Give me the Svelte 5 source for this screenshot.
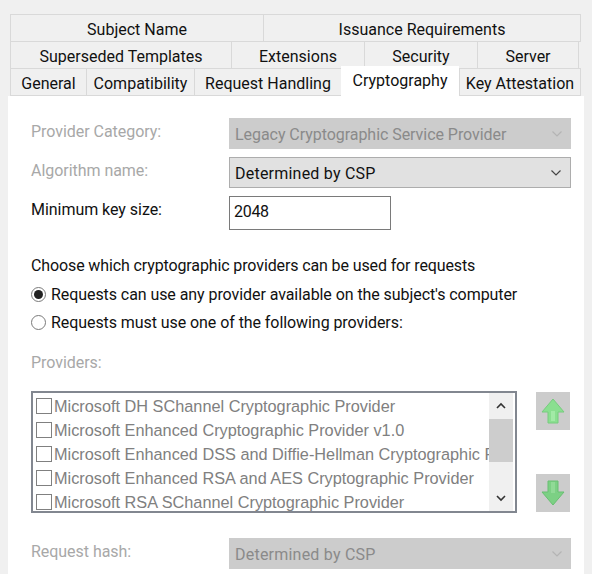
<script>
	const tabRows = [
		[
			{ label: 'Subject Name', width: 254 },
			{ label: 'Issuance Requirements', width: 318 }
		],
		[
			{ label: 'Superseded Templates', width: 222 },
			{ label: 'Extensions', width: 134 },
			{ label: 'Security', width: 114 },
			{ label: 'Server', width: 102 }
		]
	]
	const frontTabs = [
		{ label: 'General', width: 77 },
		{ label: 'Compatibility', width: 109 },
		{ label: 'Request Handling', width: 148 },
		{ label: 'Cryptography', width: 118, active: true },
		{ label: 'Key Attestation', width: 122 }
	]
	const providers = [
		'Microsoft DH SChannel Cryptographic Provider',
		'Microsoft Enhanced Cryptographic Provider v1.0',
		'Microsoft Enhanced DSS and Diffie-Hellman Cryptographic Provider',
		'Microsoft Enhanced RSA and AES Cryptographic Provider',
		'Microsoft RSA SChannel Cryptographic Provider'
	]
</script>

<div class="dialog">
	<div class="tabs">
		{#each tabRows as row}
			<div class="tab-row">
				{#each row as tab}
					<div class="tab" style="width: {tab.width}px">{tab.label}</div>
				{/each}
			</div>
		{/each}
		<div class="tab-row front">
			{#each frontTabs as tab}
				<div class="tab" class:active={tab.active} style="width: {tab.width}px">{tab.label}</div>
			{/each}
		</div>
	</div>

	<div class="panel">
		<div class="field first">
			<span class="label disabled">Provider Category:</span>
			<div class="combo off">
				<span>Legacy Cryptographic Service Provider</span>
				<svg class="chev" width="12" height="8" viewBox="0 0 12 8"><path d="M1.5 1.5 6 6l4.5-4.5" /></svg>
			</div>
		</div>
		<div class="field">
			<span class="label disabled">Algorithm name:</span>
			<div class="combo on">
				<span class="wide">Determined by CSP</span>
				<svg class="chev" width="12" height="8" viewBox="0 0 12 8"><path d="M1.5 1.5 6 6l4.5-4.5" /></svg>
			</div>
		</div>
		<div class="field">
			<span class="label">Minimum key size:</span>
			<div class="input">2048</div>
		</div>

		<p class="choose">Choose which cryptographic providers can be used for requests</p>
		<div class="radio-row">
			<span class="radio checked"></span>
			<span>Requests can use any provider available on the subject's computer</span>
		</div>
		<div class="radio-row">
			<span class="radio"></span>
			<span>Requests must use one of the following providers:</span>
		</div>

		<p class="label disabled providers-label">Providers:</p>
		<div class="providers">
			<div class="listbox">
				<div class="items">
					{#each providers as name}
						<div class="item"><span class="check"></span><span class="name">{name}</span></div>
					{/each}
				</div>
				<div class="scrollbar">
					<svg width="12" height="8" viewBox="0 0 12 8"><path d="M2 6 6 2l4 4" /></svg>
					<div class="track"><div class="thumb"></div></div>
					<svg width="12" height="8" viewBox="0 0 12 8"><path d="M2 2l4 4 4-4" /></svg>
				</div>
			</div>
			<div class="moves">
				<div class="move">
					<svg width="24" height="26" viewBox="0 0 24 26">
						<path d="M12 1 23 14H17V25H7V14H1Z" fill="#8adf90" stroke="#76cc7e" />
						<path d="M10 13V23H14V13Z" fill="#a2eaa6" />
					</svg>
				</div>
				<div class="move">
					<svg width="24" height="26" viewBox="0 0 24 26">
						<path d="M7 1H17V12H23L12 25 1 12H7Z" fill="#7cd084" stroke="#69bf72" />
						<path d="M10 2V13H14V2Z" fill="#90da96" />
					</svg>
				</div>
			</div>
		</div>

		<div class="field hash">
			<span class="label disabled">Request hash:</span>
			<div class="combo off">
				<span class="wide">Determined by CSP</span>
				<svg class="chev" width="12" height="8" viewBox="0 0 12 8"><path d="M1.5 1.5 6 6l4.5-4.5" /></svg>
			</div>
		</div>
	</div>
</div>

<style>
	:global(body) {
		margin: 0;
		background: #f0f0f0;
	}

	.dialog {
		width: 592px;
		height: 574px;
		overflow: hidden;
		font-family: Roboto, sans-serif;
		font-size: 16px;
		color: #111;
		box-sizing: border-box;
		padding-top: 14px;
	}

	.tabs {
		margin-left: 10px;
		width: 571px;
		height: 82px;
	}

	.tab-row {
		display: flex;
		height: 27px;
	}

	.tab {
		box-sizing: border-box;
		height: 28px;
		border: 1px solid #d9d9d9;
		margin-right: -1px;
		padding-top: 2px;
		display: flex;
		align-items: center;
		justify-content: center;
		white-space: nowrap;
		position: relative;
	}

	.tab.active {
		height: 31px;
		margin: -2px 0 0 0;
		background: #fff;
		border: none;
		padding: 0 0 3px;
		z-index: 2;
	}

	.panel {
		margin-left: 8px;
		width: 576px;
		height: 478px;
		background: #fff;
		box-sizing: border-box;
		padding: 22px 13px 0 23px;
		position: relative;
		z-index: 1;
	}

	.field {
		display: flex;
		align-items: flex-start;
		margin-bottom: 8px;
	}

	.label {
		width: 198px;
		flex: none;
		margin: 0;
		line-height: 28px;
		letter-spacing: -0.04px;
	}

	.disabled {
		color: #a8a8a8;
	}

	.combo {
		box-sizing: border-box;
		width: 342px;
		height: 31px;
		display: flex;
		align-items: center;
		justify-content: space-between;
		padding: 2px 8px 0 6px;
	}

	.combo.off {
		background: #ccc;
		color: #8a8a8a;
	}

	.combo.on {
		background: #e1e1e1;
		border: 1px solid #adadad;
		padding-left: 5px;
	}

	.combo span {
		letter-spacing: -0.05px;
	}

	.combo .wide {
		letter-spacing: 0.22px;
	}

	.chev {
		fill: none;
		stroke: #b4b4b4;
		stroke-width: 1.2;
		margin-top: -2px;
	}

	.combo.on .chev {
		stroke: #444;
	}

	.input {
		box-sizing: border-box;
		width: 162px;
		height: 34px;
		border: 1px solid #7a7a7a;
		display: flex;
		align-items: center;
		padding: 0 0 3px 4px;
		letter-spacing: -0.3px;
	}

	.choose {
		margin: 26px 0 0;
		height: 20px;
		line-height: 20px;
		letter-spacing: -0.12px;
	}

	.radio-row {
		display: flex;
		align-items: center;
		gap: 5px;
		height: 28px;
		letter-spacing: -0.07px;
	}

	.choose + .radio-row {
		margin-top: 4px;
	}

	.radio {
		box-sizing: border-box;
		width: 15px;
		height: 15px;
		border: 1px solid #7a7a7a;
		border-radius: 50%;
		flex: none;
		display: flex;
		align-items: center;
		justify-content: center;
	}

	.radio.checked::after {
		content: "";
		width: 9px;
		height: 9px;
		border-radius: 50%;
		background: #222;
	}

	.providers-label {
		margin-top: 16px;
		height: 22px;
		line-height: 22px;
	}

	.providers {
		display: flex;
		margin-top: 17px;
	}

	.listbox {
		box-sizing: border-box;
		width: 486px;
		height: 122px;
		border: 2px solid #828790;
		display: flex;
		overflow: hidden;
		background: #fff;
	}

	.items {
		width: 456px;
		flex: none;
		height: 118px;
		overflow: hidden;
		color: #808080;
		padding-left: 3px;
		box-sizing: border-box;
		font-family: "Liberation Sans", sans-serif;
		font-size: 16.3px;
	}

	.item {
		display: flex;
		align-items: center;
		height: 24px;
		gap: 2px;
		white-space: nowrap;
		box-sizing: border-box;
		padding-top: 2px;
	}

	.check {
		box-sizing: border-box;
		width: 16px;
		height: 16px;
		border: 1px solid #808080;
		flex: none;
	}

	.scrollbar {
		width: 24px;
		flex: none;
		background: #f0f0f0;
		display: flex;
		flex-direction: column;
		align-items: center;
	}

	.scrollbar svg {
		fill: none;
		stroke: #333;
		stroke-width: 1.6;
		flex: none;
		margin: 9px 0;
	}

	.track {
		flex: 1;
		width: 100%;
	}

	.thumb {
		height: 43px;
		background: #cdcdcd;
	}

	.moves {
		margin-left: 19px;
		margin-top: 1px;
		display: flex;
		flex-direction: column;
		justify-content: space-between;
		height: 120px;
	}

	.move {
		width: 34px;
		height: 38px;
		background: #ccc;
		display: flex;
		align-items: center;
		justify-content: center;
	}

	.hash {
		margin-top: 25px;
	}
</style>
